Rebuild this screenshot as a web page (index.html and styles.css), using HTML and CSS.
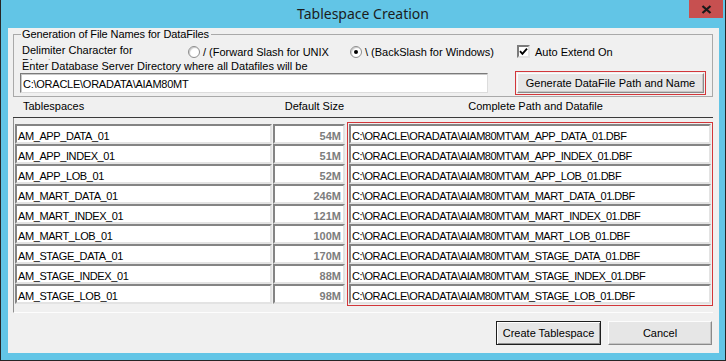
FILE: index.html
```html
<!doctype html>
<html>
 <head>
	<meta charset="UTF-8">
	<title>Tablespace Creation</title>
	<link rel="stylesheet" href="styles.css">
 </head>
 <body>
	<div class="window">
		<div class="titlebar">
			<span class="title">Tablespace Creation</span>
			<span class="close">
				<svg width="11" height="9" viewBox="0 0 11 9"><path d="M1.5 1 L9.5 8 M9.5 1 L1.5 8" stroke="#1a1a1a" stroke-width="2.3" fill="none"/></svg>
			</span>
		</div>
		<div class="client">
			<fieldset class="group">
				<legend>Generation of File Names for DataFiles</legend>
				<div class="opts">
					<div class="delim">Delimiter Character for Directory</div>
					<div class="opt"><span class="radio"></span>/ (Forward Slash for UNIX</div>
					<div class="opt"><span class="radio on"></span>\ (BackSlash for Windows)</div>
					<div class="opt chk_opt">
						<span class="check"><svg width="9" height="9" viewBox="0 0 9 9"><path d="M1 4.2 L3.4 6.8 L8 1.6" stroke="#000" stroke-width="1.9" fill="none"/></svg></span>Auto Extend On
					</div>
				</div>
				<div class="dir_label">Enter Database Server Directory where all Datafiles will be</div>
				<div class="dir_row">
					<div class="txt dir">C:\ORACLE\ORADATA\AIAM80MT</div>
					<div class="btn gen">Generate DataFile Path and Name</div>
				</div>
			</fieldset>

			<div class="cols head">
				<div class="c1">Tablespaces</div>
				<div class="c2">Default Size</div>
				<div class="c3">Complete Path and Datafile</div>
			</div>

			<div class="list">
				<div class="cols">
					<div class="c1">
						<div class="txt">AM_APP_DATA_01</div>
						<div class="txt">AM_APP_INDEX_01</div>
						<div class="txt">AM_APP_LOB_01</div>
						<div class="txt">AM_MART_DATA_01</div>
						<div class="txt">AM_MART_INDEX_01</div>
						<div class="txt">AM_MART_LOB_01</div>
						<div class="txt">AM_STAGE_DATA_01</div>
						<div class="txt">AM_STAGE_INDEX_01</div>
						<div class="txt">AM_STAGE_LOB_01</div>
					</div>
					<div class="c2">
						<div class="txt size">54M</div>
						<div class="txt size">51M</div>
						<div class="txt size">52M</div>
						<div class="txt size">246M</div>
						<div class="txt size">121M</div>
						<div class="txt size">100M</div>
						<div class="txt size">170M</div>
						<div class="txt size">88M</div>
						<div class="txt size">98M</div>
					</div>
					<div class="c3 marked">
						<div class="txt">C:\ORACLE\ORADATA\AIAM80MT\AM_APP_DATA_01.DBF</div>
						<div class="txt">C:\ORACLE\ORADATA\AIAM80MT\AM_APP_INDEX_01.DBF</div>
						<div class="txt">C:\ORACLE\ORADATA\AIAM80MT\AM_APP_LOB_01.DBF</div>
						<div class="txt">C:\ORACLE\ORADATA\AIAM80MT\AM_MART_DATA_01.DBF</div>
						<div class="txt">C:\ORACLE\ORADATA\AIAM80MT\AM_MART_INDEX_01.DBF</div>
						<div class="txt">C:\ORACLE\ORADATA\AIAM80MT\AM_MART_LOB_01.DBF</div>
						<div class="txt">C:\ORACLE\ORADATA\AIAM80MT\AM_STAGE_DATA_01.DBF</div>
						<div class="txt">C:\ORACLE\ORADATA\AIAM80MT\AM_STAGE_INDEX_01.DBF</div>
						<div class="txt">C:\ORACLE\ORADATA\AIAM80MT\AM_STAGE_LOB_01.DBF</div>
					</div>
				</div>
			</div>

			<div class="actions">
				<div class="btn default">Create Tablespace</div>
				<div class="btn">Cancel</div>
			</div>
		</div>
	</div>
 </body>
</html>
```

FILE: styles.css
```css
body{
	margin:0;
	font-family:"Liberation Sans",Arial,sans-serif;
	font-size:11px;
	color:#000;
}

/* 窗口外框 */
.window{
	width:726px;height:361px;
	box-sizing:border-box;
	background:#62c5e6;
	border:1px solid #262626;
	border-top:0;
	display:flex;
	flex-direction:column;
}
.titlebar{
	flex:none;
	height:28px;
	position:relative;
	display:flex;
	justify-content:center;
	align-items:center;
}
.title{
	font-family:"Noto Sans","Open Sans",sans-serif;
	font-size:14px;
	color:#1c1c1c;
	margin-top:-2px;
}
.close{
	position:absolute;
	top:0;right:2px;
	width:34px;height:18px;
	background:#c75050;
	display:flex;
	align-items:center;
	justify-content:center;
}
.close svg{display:block}

.client{
	flex:1;
	margin:0 6px 7px 7px;
	background:#f0f0f0;
	display:flex;
	flex-direction:column;
}

/* 分组框 */
.group{
	margin:0 6px 0 5px;
	padding:0 0 3px 6px;
	border:1px solid #a9a9a9;
	min-width:0;
}
.group legend{
	margin-left:1px;
	padding:0 2px 0 1px;
	line-height:13px;
	letter-spacing:-0.1px;
}
.opts{
	margin-top:3px;
	height:16px;
	display:grid;
	grid-template-columns:168px 162px 167px auto;
}
.delim{
	width:150px;height:16px;
	padding-left:2px;
	line-height:13px;
	overflow:hidden;
}
.opt{
	display:flex;
	align-items:center;
	height:13px;
	margin-top:1px;
	gap:3px;
	white-space:nowrap;
}
.chk_opt{gap:5px}
.radio{
	width:10px;height:10px;
	border:1px solid #8d8d8d;
	border-radius:50%;
	background:#fff;
	box-shadow:inset 1px 1px 1px #c9c9c9;
	display:flex;
	align-items:center;
	justify-content:center;
}
.radio.on::after{
	content:"";
	width:4px;height:4px;
	border-radius:50%;
	background:#000;
}
.check{
	width:9px;height:9px;
	border:2px solid;
	border-color:#7b7b7b #e3e3e3 #e3e3e3 #7b7b7b;
	background:#fff;
}
.check svg{display:block}

.dir_label{
	padding-left:2px;
	line-height:13px;
}
.dir_row{
	display:flex;
	align-items:flex-start;
}

/* 文本框：下凹效果 */
.txt{
	height:20px;
	box-sizing:border-box;
	border:2px solid;
	border-color:#848484 #e3e3e3 #e3e3e3 #848484;
	background:#fff;
	padding:3px 0 0 1px;
	line-height:14px;
	white-space:nowrap;
	letter-spacing:-0.4px;
}
.dir{
	width:468px;
	border-width:1px;
	border-color:#7a7a7a #dcdcdc #dcdcdc #7a7a7a;
	box-shadow:inset 1px 1px #c8c8c8;
	padding:3px 0 0 2px;
	letter-spacing:-0.25px;
}
.c3 .txt{letter-spacing:-0.5px}

/* 按钮 */
.btn{
	box-sizing:border-box;
	display:flex;
	align-items:center;
	justify-content:center;
	background:#e6e6e6;
	border:1px solid;
	border-color:#fcfcfc #8a8a8a #8a8a8a #fcfcfc;
	box-shadow:inset -1px -1px #c6c6c6;
	white-space:nowrap;
}
.gen{
	width:187px;height:20px;
	margin-left:29px;
	outline:1px solid #d2363a;
	outline-offset:1px;
}
.btn.default{
	border-color:#1e1e1e;
	box-shadow:inset 1px 1px #fff,inset -1px -1px #8f8f8f;
}

/* 列表 */
.cols{display:flex}
.cols .c1{width:257px}
.cols .c2{width:72px;margin-left:1px}
.cols .c3{width:362px;margin-left:4px}

.head{
	margin:0 6px 0 5px;
	padding-left:2px;
	height:18px;
	padding-bottom:2px;
	line-height:18px;
	border-bottom:1px solid #3a3a3a;
}
.head .c1{padding-left:8px;box-sizing:border-box}
.head .c2{text-align:right;padding-right:1px;box-sizing:border-box}
.head .c3{text-align:center;padding-left:11px;box-sizing:border-box}

.list{
	margin:0 6px 0 5px;
	height:188px;
	padding:6px 0 0 1px;
	border-left:1px solid #8f8f8f;
	border-bottom:1px solid #fdfdfd;
}
.size{
	text-align:right;
	padding-right:2px;
	font-weight:bold;
	color:#7d7d7d;
	letter-spacing:0;
}
.marked{
	outline:1px solid #d2363a;
	outline-offset:1px;
}

.actions{
	display:flex;
	justify-content:flex-end;
	gap:7px;
	margin-top:8px;
	padding-right:7px;
}
.actions .btn{height:24px;width:104px}
.actions .default{width:105px}
```
